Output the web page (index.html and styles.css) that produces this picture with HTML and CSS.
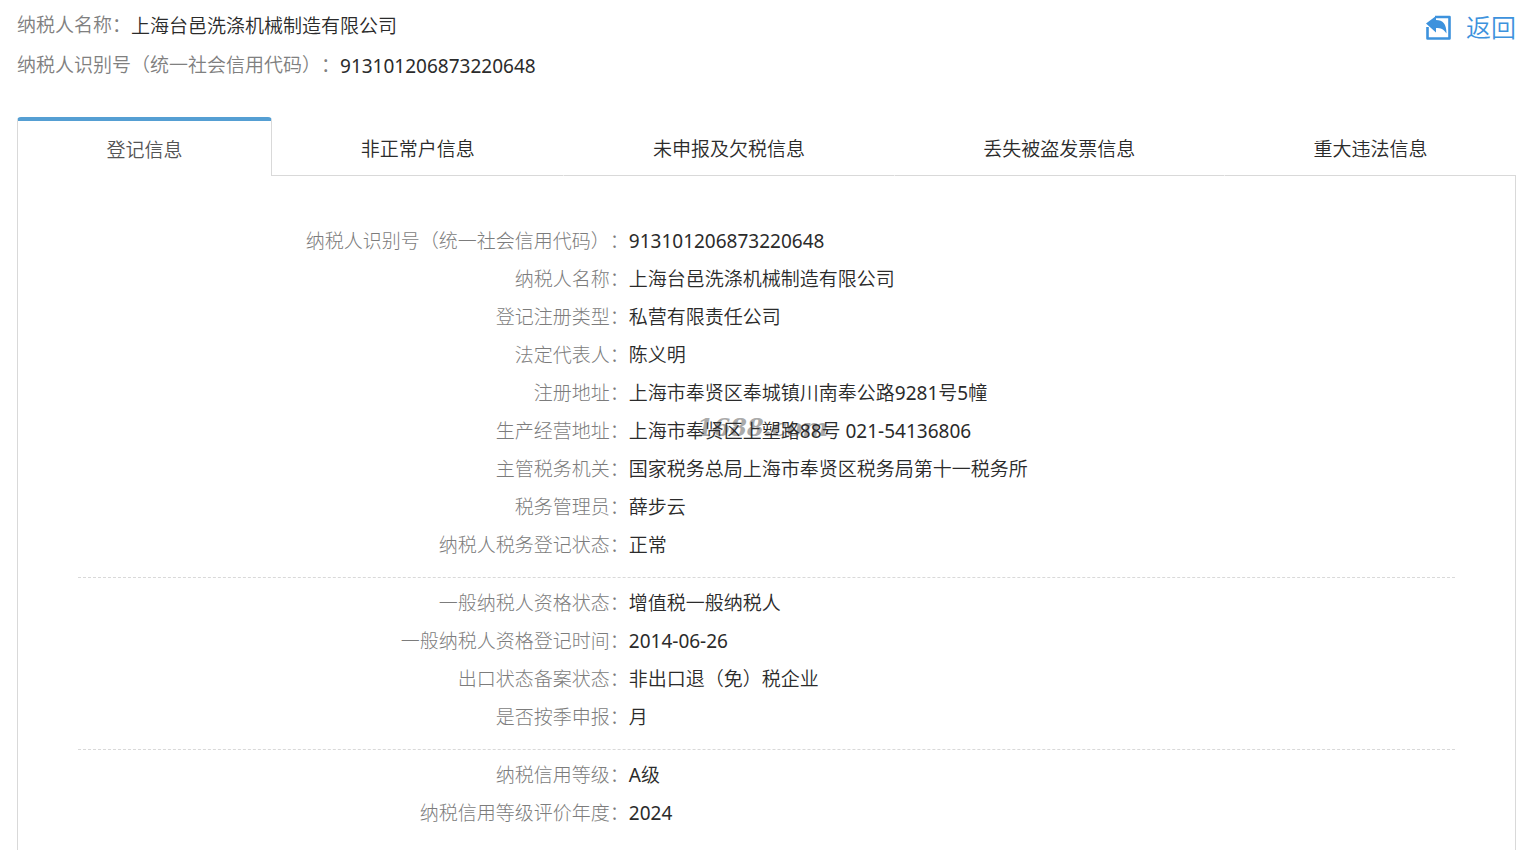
FILE: index.html
```
<!doctype html>
<html lang="zh-CN">
 <head>
  <meta charset="UTF-8">
  <title>纳税人信息</title>
  <link rel="stylesheet" href="styles.css">
 </head>
 <body>
 <div id="page">
	<!--头部-->
	<div class="header">
		<div class="h_info">
			<p><span class="name">纳税人名称：</span><span class="val">上海台邑洗涤机械制造有限公司</span></p>
			<p><span class="name">纳税人识别号（统一社会信用代码）：</span><span class="val">913101206873220648</span></p>
		</div>
		<a href="javascript:void(0);" class="back">
			<svg width="25" height="26" viewBox="0 0 25 26" aria-hidden="true">
				<path d="M9 3H23.500V24.500H1.500V13" fill="none" stroke="#3d92dd" stroke-width="2.600" stroke-linejoin="round"/>
				<path d="M0 9.500L10 2V6C17 6 20.500 10 20.500 19.500C17.500 15 15 14 10 14V18.500Z" fill="#3d92dd"/>
			</svg>
			<span>返回</span>
		</a>
	</div>
	<!--选项卡-->
	<div class="tab">
		<button type="button" class="on">登记信息</button>
		<button type="button">非正常户信息</button>
		<button type="button">未申报及欠税信息</button>
		<button type="button">丢失被盗发票信息</button>
		<button type="button">重大违法信息</button>
	</div>
	<div class="panel">
		<dl>
			<dt>纳税人识别号（统一社会信用代码）：</dt><dd>913101206873220648</dd>
			<dt>纳税人名称：</dt><dd>上海台邑洗涤机械制造有限公司</dd>
			<dt>登记注册类型：</dt><dd>私营有限责任公司</dd>
			<dt>法定代表人：</dt><dd>陈义明</dd>
			<dt>注册地址：</dt><dd>上海市奉贤区奉城镇川南奉公路9281号5幢</dd>
			<dt>生产经营地址：</dt><dd>上海市奉贤区上塑路88号 021-54136806<span class="mark">1688.com</span></dd>
			<dt>主管税务机关：</dt><dd>国家税务总局上海市奉贤区税务局第十一税务所</dd>
			<dt>税务管理员：</dt><dd>薛步云</dd>
			<dt>纳税人税务登记状态：</dt><dd>正常</dd>
		</dl>
		<dl>
			<dt>一般纳税人资格状态：</dt><dd>增值税一般纳税人</dd>
			<dt>一般纳税人资格登记时间：</dt><dd>2014-06-26</dd>
			<dt>出口状态备案状态：</dt><dd>非出口退（免）税企业</dd>
			<dt>是否按季申报：</dt><dd>月</dd>
		</dl>
		<dl>
			<dt>纳税信用等级：</dt><dd>A级</dd>
			<dt>纳税信用等级评价年度：</dt><dd>2024</dd>
		</dl>
	</div>
 </div>
 </body>
</html>
```
FILE: styles.css
```
*{padding:0;margin:0;box-sizing:border-box;}
body{background:#fff;color:#2b2b2b;font:19px/38px "Noto Sans","Noto Sans CJK SC DemiLight","Noto Sans CJK SC",sans-serif;text-spacing-trim:space-all;overflow-x:hidden;}
#page{padding:6px 10px 0 17px;}
.header{display:flex;justify-content:space-between;align-items:flex-start;}
.h_info p{display:flex;line-height:40px;}
.h_info .name{color:#808080;line-height:38px;}
.back{display:flex;align-items:center;gap:15px;height:42px;color:#3d92dd;font-size:25px;text-decoration:none;}
.back svg{display:block;}
/*选项卡*/
.tab{display:flex;margin-top:31px;}
.tab button{flex:1 1 auto;height:59px;padding-top:6px;border:0;border-bottom:1px solid #d9d9d9;border-right:1px solid #fff;background:#fff;color:#2b2b2b;font:inherit;cursor:pointer;}
.tab button:last-child{border-right:0;}
.tab .on{padding-top:2px;border:1px solid #d9d9d9;border-top:4px solid #559fd3;border-bottom:0;border-radius:4px 4px 0 0;color:#555;}
/*登记信息*/
.panel{padding:46px 60px 40px;border:1px solid #d9d9d9;border-top:0;}
.panel dl{display:grid;grid-template-columns:40% 1fr;}
.panel dl+dl{margin-top:13px;padding-top:6px;border-top:1px dashed #d9d9d9;}
.panel dt{text-align:right;color:#7c7c7c;font-family:"Noto Sans","Noto Sans CJK SC",sans-serif;font-weight:300;}
.panel dd{position:relative;z-index:0;}
/*水印*/
.mark{position:absolute;left:68px;top:-3px;z-index:-1;color:#aaa;font:italic bold 24px/38px "DejaVu Serif",serif;}
```
